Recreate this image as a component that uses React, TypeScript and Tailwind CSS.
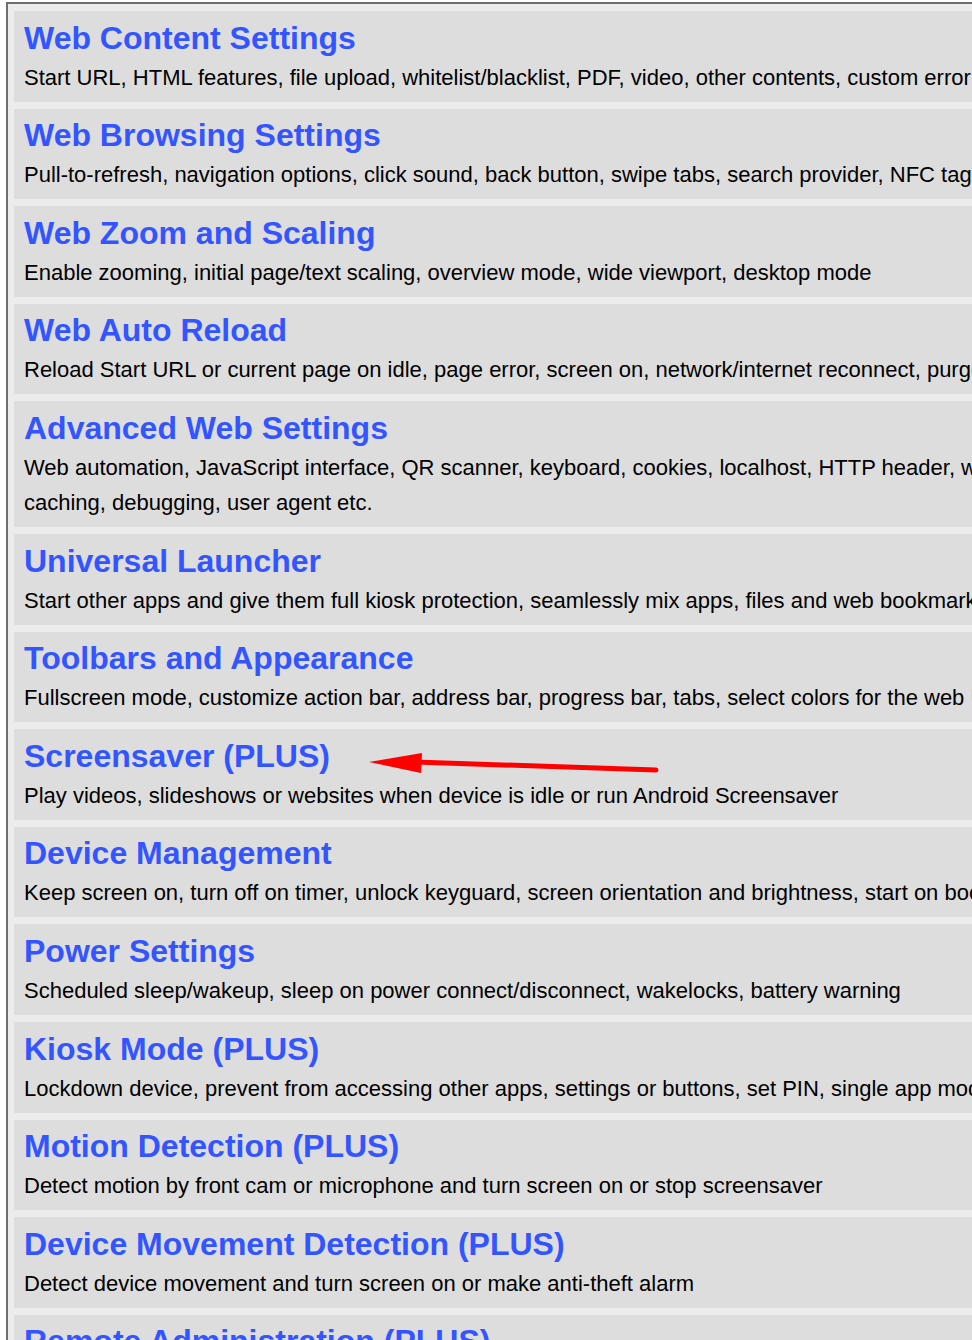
import React from "react";

type Section = {
  title: string;
  description: string;
};

const sections: Section[] = [
  {
    title: "Web Content Settings",
    description:
      "Start URL, HTML features, file upload, whitelist/blacklist, PDF, video, other contents, custom error pages",
  },
  {
    title: "Web Browsing Settings",
    description:
      "Pull-to-refresh, navigation options, click sound, back button, swipe tabs, search provider, NFC tags",
  },
  {
    title: "Web Zoom and Scaling",
    description:
      "Enable zooming, initial page/text scaling, overview mode, wide viewport, desktop mode",
  },
  {
    title: "Web Auto Reload",
    description:
      "Reload Start URL or current page on idle, page error, screen on, network/internet reconnect, purge cache",
  },
  {
    title: "Advanced Web Settings",
    description:
      "Web automation, JavaScript interface, QR scanner, keyboard, cookies, localhost, HTTP header, web caching, debugging, user agent etc.",
  },
  {
    title: "Universal Launcher",
    description:
      "Start other apps and give them full kiosk protection, seamlessly mix apps, files and web bookmarks",
  },
  {
    title: "Toolbars and Appearance",
    description:
      "Fullscreen mode, customize action bar, address bar, progress bar, tabs, select colors for the web UI",
  },
  {
    title: "Screensaver (PLUS)",
    description:
      "Play videos, slideshows or websites when device is idle or run Android Screensaver",
  },
  {
    title: "Device Management",
    description:
      "Keep screen on, turn off on timer, unlock keyguard, screen orientation and brightness, start on boot",
  },
  {
    title: "Power Settings",
    description:
      "Scheduled sleep/wakeup, sleep on power connect/disconnect, wakelocks, battery warning",
  },
  {
    title: "Kiosk Mode (PLUS)",
    description:
      "Lockdown device, prevent from accessing other apps, settings or buttons, set PIN, single app mode",
  },
  {
    title: "Motion Detection (PLUS)",
    description:
      "Detect motion by front cam or microphone and turn screen on or stop screensaver",
  },
  {
    title: "Device Movement Detection (PLUS)",
    description:
      "Detect device movement and turn screen on or make anti-theft alarm",
  },
  {
    title: "Remote Administration (PLUS)",
    description:
      "Remote control the device in your browser, send commands, get screenshots and device info",
  },
];

const SectionCard: React.FC<{ section: Section }> = ({ section }) => (
  <div className="bg-[#dddddd] mb-[7px] pt-[4.6px] pb-[7px] pl-[10px] pr-[10px]">
    <a
      href="#"
      className="block text-[32px] leading-[44px] font-bold text-[#3355ff] no-underline"
    >
      {section.title}
    </a>
    <div className="text-[22px] leading-[35px] text-black w-[1040px]">
      {section.description}
    </div>
  </div>
);

const App: React.FC = () => {
  return (
    <div
      className="relative w-[972px] h-[1340px] overflow-hidden bg-white"
      style={{ fontFamily: '"Liberation Sans", Arial, sans-serif' }}
    >
      <div className="mt-[2px] ml-[6px] w-[1200px] border-l-2 border-t-2 border-[#6e6e6e] bg-[#ececec] pt-[7px] pl-[6px]">
        {sections.map((s) => (
          <SectionCard key={s.title} section={s} />
        ))}
      </div>

      {/* red annotation arrow */}
      <svg
        className="absolute left-0 top-0 pointer-events-none"
        width="972"
        height="1340"
        viewBox="0 0 972 1340"
      >
        <line
          x1="656"
          y1="770"
          x2="415"
          y2="762"
          stroke="#ff0000"
          strokeWidth="5"
          strokeLinecap="round"
        />
        <polygon points="369,762 422,753 421,773" fill="#ff0000" />
      </svg>
    </div>
  );
};

export default App;
